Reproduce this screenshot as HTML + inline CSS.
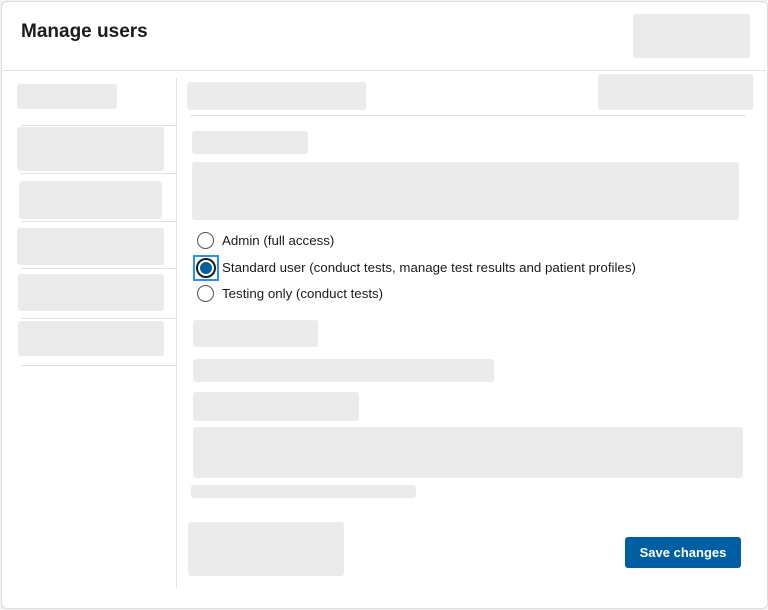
<!DOCTYPE html><html><head><style>
body{margin:0;width:768px;height:610px;background:#f3f3f3;font-family:"Liberation Sans",sans-serif;position:relative;overflow:hidden}
.card{position:absolute;left:1px;top:1px;width:765px;height:606px;background:#fff;border:1px solid #ddd;border-radius:6px}
.b{position:absolute;background:#ebebeb;border-radius:3px}
.l{position:absolute;height:1px;background:#e2e2e2}
.r{position:absolute;width:17px;height:17px;border:1.5px solid #555;border-radius:50%;left:197px;background:#fff;box-sizing:border-box}
.t{position:absolute;left:222px;font-size:13.3px;color:#1b1b1b}
</style></head><body>
<div class="card"></div>
<div style="position:absolute;left:21px;top:21px;font-size:19px;font-weight:bold;color:#1b1b1b">Manage users</div>
<div class="b" style="left:633px;top:14px;width:117px;height:44px"></div>
<div class="l" style="left:3px;top:70px;width:763px"></div>
<div style="position:absolute;left:176px;top:78px;width:1px;height:510px;background:#e2e2e2"></div>
<div class="b" style="left:17px;top:84px;width:100px;height:25px"></div>
<div class="l" style="left:21px;top:125px;width:155px"></div>
<div class="b" style="left:17px;top:127px;width:147px;height:44px"></div>
<div class="l" style="left:21px;top:173px;width:155px"></div>
<div class="b" style="left:19px;top:181px;width:143px;height:38px"></div>
<div class="l" style="left:21px;top:221px;width:155px"></div>
<div class="b" style="left:17px;top:228px;width:147px;height:37px"></div>
<div class="l" style="left:21px;top:268px;width:155px"></div>
<div class="b" style="left:18px;top:274px;width:146px;height:37px"></div>
<div class="l" style="left:21px;top:318px;width:155px"></div>
<div class="b" style="left:18px;top:321px;width:146px;height:35px"></div>
<div class="l" style="left:21px;top:365px;width:155px"></div>
<div class="b" style="left:187px;top:82px;width:179px;height:28px"></div>
<div class="b" style="left:598px;top:74px;width:155px;height:36px"></div>
<div class="l" style="left:190px;top:115px;width:556px"></div>
<div class="b" style="left:192px;top:131px;width:116px;height:23px"></div>
<div class="b" style="left:192px;top:162px;width:547px;height:58px"></div>
<div class="r" style="top:232px"></div><div class="t" style="top:233px">Admin (full access)</div>
<div style="position:absolute;left:193px;top:255px;width:26px;height:26px;border:2px solid #2491ff;box-sizing:border-box"></div>
<div class="r" style="left:196px;top:258px;width:20px;height:20px;border:2px solid #1b1b1b"></div>
<div style="position:absolute;left:200px;top:262px;width:12px;height:12px;border-radius:50%;background:#005ea2"></div>
<div class="t" style="top:260px">Standard user (conduct tests, manage test results and patient profiles)</div>
<div class="r" style="top:285px"></div><div class="t" style="top:286px">Testing only (conduct tests)</div>
<div class="b" style="left:193px;top:320px;width:125px;height:27px"></div>
<div class="b" style="left:193px;top:359px;width:301px;height:23px"></div>
<div class="b" style="left:193px;top:392px;width:166px;height:29px"></div>
<div class="b" style="left:193px;top:427px;width:550px;height:51px"></div>
<div class="b" style="left:191px;top:485px;width:225px;height:13px"></div>
<div class="b" style="left:188px;top:522px;width:156px;height:54px"></div>
<div style="position:absolute;left:625px;top:537px;width:116px;height:31px;background:#005ea2;border-radius:3px;color:#fff;font-weight:bold;font-size:13px;text-align:center;line-height:31px">Save changes</div>
</body></html>
